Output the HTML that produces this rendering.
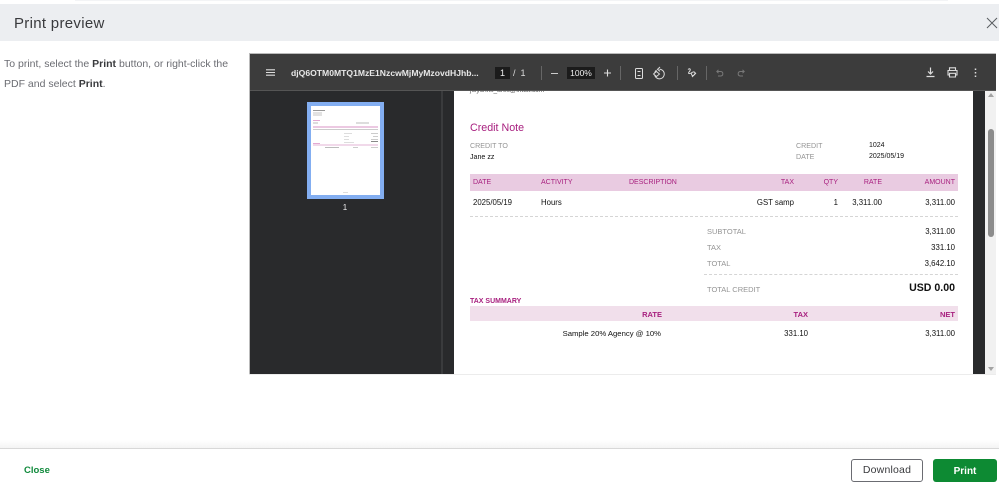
<!DOCTYPE html>
<html><head><meta charset="utf-8"><style>
html,body{margin:0;padding:0;background:#fff}
body{width:999px;height:487px;position:relative;overflow:hidden;font-family:"Liberation Sans",sans-serif}
.a,.t{position:absolute}
.t{white-space:nowrap;line-height:12px}
.g{color:#949494;font-size:7.5px}
.k{color:#111;font-size:7.8px}
.m{color:#a8207f;font-size:7px}
.r{text-align:right}
svg{position:absolute;overflow:visible}
.th .a{position:absolute}
</style></head><body>
<div class="a" style="left:75px;top:0;width:873px;height:1px;background:#f3f4f6"></div>
<div class="a" style="left:0;top:4px;width:999px;height:37px;background:#eceef1"></div>
<div class="t" style="left:14px;top:15px;font-size:15px;line-height:17px;color:#393a3d;letter-spacing:.3px">Print preview</div>
<svg style="left:987px;top:18px" width="10" height="10"><path d="M0 0L10 10M10 0L0 10" stroke="#5a5d61" stroke-width="1"/></svg>
<div class="t" style="left:4px;top:58px;font-size:10.5px;color:#6b6c72">To print, select the <b style="color:#393a3d">Print</b> button, or right-click the</div>
<div class="t" style="left:4px;top:78px;font-size:10.5px;color:#6b6c72">PDF and select <b style="color:#393a3d">Print</b>.</div>

<div class="a" style="left:249px;top:53px;width:747px;height:321px;background:#292a2c"></div>
<div class="a" style="left:249px;top:53px;width:747px;height:1px;background:#bbb"></div>
<div class="a" style="left:249px;top:53px;width:1px;height:321px;background:#bbb"></div>
<div class="a" style="left:250px;top:54px;width:746px;height:36px;background:#3c3c3c"></div>
<div class="a" style="left:441px;top:91px;width:2px;height:283px;background:#3a3b3d"></div>
<svg style="left:266px;top:69px" width="10" height="8"><path d="M0 .8H9M0 3.5H9M0 6.200H9" stroke="#ddd" stroke-width="1.100"/></svg>
<div class="t" style="left:291px;top:67px;font-size:8.6px;font-weight:bold;color:#e8e8e8">djQ6OTM0MTQ1MzE1NzcwMjMyMzovdHJhb...</div>
<div class="a" style="left:495px;top:67px;width:15px;height:12px;background:#1b1b1b"></div>
<div class="t" style="left:495px;top:67px;width:15px;text-align:center;font-size:9px;color:#eee">1</div>
<div class="t" style="left:513px;top:67px;font-size:9px;color:#ddd">/&nbsp;&nbsp;1</div>
<div class="a" style="left:541px;top:66px;width:1px;height:14px;background:#666"></div>
<div class="a" style="left:620px;top:66px;width:1px;height:14px;background:#666"></div>
<div class="a" style="left:677px;top:66px;width:1px;height:14px;background:#666"></div>
<div class="a" style="left:706px;top:66px;width:1px;height:14px;background:#666"></div>
<svg style="left:551px;top:73px" width="7" height="1"><path d="M0 .5H7" stroke="#ccc"/></svg>
<div class="a" style="left:567px;top:67px;width:28px;height:12px;background:#1b1b1b"></div>
<div class="t" style="left:567px;top:67px;width:28px;text-align:center;font-size:8.500px;color:#eee">100%</div>
<svg style="left:604px;top:69px" width="8" height="8"><path d="M0 4H7M3.500 .5V7.500" stroke="#ddd" stroke-width="1.100"/></svg>
<svg style="left:635px;top:68px" width="9" height="11"><rect x=".5" y=".5" width="7" height="10" rx="1" fill="none" stroke="#ddd"/><path d="M2.500 3.500H5.500M2.500 7.500H5.500" stroke="#ddd"/></svg>
<svg style="left:653px;top:67px" width="13" height="12"><path d="M6.500 2.200A4.800 4.800 0 1 1 3.500 3.200" fill="none" stroke="#ddd"/><path d="M7 0L4.500 2.300L7 4.400" fill="none" stroke="#ddd"/><path d="M.5 7L3.500 4.500L6.500 7L3.500 9.500Z" fill="#3c3c3c" stroke="#ddd" stroke-width=".9"/></svg>
<svg style="left:687px;top:68px" width="10" height="10"><path d="M1 1.500C3.500 -.5 4 2 2 4C.5 6 3 6 5 4.500C7 3 9 4.500 7.500 6.500C6 8.500 3.500 7 5 5.500" fill="none" stroke="#ddd"/><path d="M5 9L9 5" stroke="#ddd"/></svg>
<svg style="left:716px;top:69px" width="8" height="8"><path d="M1 2.500H5A2.300 2.300 0 0 1 5 7H2M2.500 .8L.8 2.500L2.500 4.200" fill="none" stroke="#777"/></svg>
<svg style="left:737px;top:69px" width="8" height="8"><path d="M7 2.500H3A2.300 2.300 0 0 0 3 7H6M5.500 .8L7.200 2.500L5.500 4.200" fill="none" stroke="#777"/></svg>
<svg style="left:926px;top:67px" width="9" height="11"><path d="M4.500 .5V6.500M2 4.500L4.500 7L7 4.500M.5 9.500H8.500" fill="none" stroke="#ddd" stroke-width="1.200"/></svg>
<svg style="left:947px;top:67px" width="11" height="11"><path d="M2.500 3.200V.8H8.500V3.200M2.500 8H1V3.500H10V8H8.500M2.500 6.300H8.500V10H2.500Z" fill="none" stroke="#ddd" stroke-width="1.100"/></svg>
<svg style="left:974px;top:68px" width="3" height="10"><path d="M1.500 .5V2M1.500 4V5.500M1.500 7.500V9" stroke="#ddd" stroke-width="1.500"/></svg>

<div class="a" style="left:307px;top:102px;width:77px;height:97px;background:#83aef1"></div>
<div class="a th" style="left:311px;top:106px;width:69px;height:89px;background:#fff;overflow:hidden;filter:blur(.3px)">
<div class="a" style="left:2px;top:3.500px;width:12px;height:1px;background:#999"></div>
<div class="a" style="left:2px;top:6px;width:9px;height:4px;background:#e2e2e2"></div>
<div class="a" style="left:2px;top:13.500px;width:7px;height:1px;background:#e3a9d2"></div>
<div class="a" style="left:2px;top:16px;width:5px;height:2px;background:#ddd"></div>
<div class="a" style="left:45px;top:16px;width:13px;height:2px;background:#ddd"></div>
<div class="a" style="left:2px;top:19.700px;width:65px;height:2.400px;background:#ecc9e2"></div>
<div class="a" style="left:2px;top:23px;width:65px;height:1px;background:#ccc"></div>
<div class="a" style="left:33px;top:27px;width:8px;height:1px;background:#ddd"></div>
<div class="a" style="left:60px;top:27px;width:7px;height:1px;background:#ccc"></div>
<div class="a" style="left:33px;top:30px;width:5px;height:1px;background:#ddd"></div>
<div class="a" style="left:62px;top:30px;width:5px;height:1px;background:#ccc"></div>
<div class="a" style="left:33px;top:32.500px;width:5px;height:1px;background:#ddd"></div>
<div class="a" style="left:60px;top:32.500px;width:7px;height:1px;background:#ccc"></div>
<div class="a" style="left:33px;top:35.500px;width:10px;height:1px;background:#ddd"></div>
<div class="a" style="left:60px;top:34.500px;width:7px;height:1.500px;background:#888"></div>
<div class="a" style="left:2px;top:37px;width:7px;height:1px;background:#e3a9d2"></div>
<div class="a" style="left:2px;top:38px;width:65px;height:2px;background:#f1d9ea"></div>
<div class="a" style="left:14px;top:41px;width:14px;height:1px;background:#bbb"></div>
<div class="a" style="left:42px;top:41px;width:5px;height:1px;background:#ccc"></div>
<div class="a" style="left:60px;top:41px;width:7px;height:1px;background:#ccc"></div>
<div class="a" style="left:32px;top:86px;width:5px;height:1px;background:#ddd"></div>
</div>
<div class="t" style="left:340px;top:202px;width:10px;text-align:center;font-size:8px;color:#eee">1</div>

<div class="a" style="left:454px;top:91px;width:519px;height:283px;background:#fff"></div>
<div class="a" style="left:454px;top:91px;width:519px;height:10px;overflow:hidden"><div class="t" style="left:16px;top:-6px;font-size:6.500px;color:#555">jolychris_ares@intuit.com</div></div>
<div class="a" style="left:250px;top:90px;width:746px;height:1px;background:#555"></div>
<div class="t" style="left:470px;top:122px;font-size:10.700px;color:#a8207f">Credit Note</div>
<div class="t g" style="left:470px;top:140px;font-size:7.100px">CREDIT TO</div>
<div class="t k" style="left:470px;top:151px;font-size:7.100px">Jane zz</div>
<div class="t g" style="left:796px;top:140px;font-size:7.100px">CREDIT</div>
<div class="t g" style="left:796px;top:151px;font-size:7.100px">DATE</div>
<div class="t k" style="left:869px;top:140px;font-size:7px">1024</div>
<div class="t k" style="left:869px;top:151px;font-size:7px">2025/05/19</div>

<div class="a" style="left:470px;top:174px;width:488px;height:17px;background:#e9cbe1"></div>
<div class="t m" style="left:473px;top:177px">DATE</div>
<div class="t m" style="left:541px;top:177px">ACTIVITY</div>
<div class="t m" style="left:629px;top:177px">DESCRIPTION</div>
<div class="t m r" style="right:205px;top:177px">TAX</div>
<div class="t m r" style="right:161px;top:177px">QTY</div>
<div class="t m r" style="right:117px;top:177px">RATE</div>
<div class="t m r" style="right:44px;top:177px">AMOUNT</div>
<div class="t k" style="left:473px;top:197px">2025/05/19</div>
<div class="t k" style="left:541px;top:197px">Hours</div>
<div class="t k r" style="right:205px;top:197px">GST samp</div>
<div class="t k r" style="right:161px;top:197px">1</div>
<div class="t k r" style="right:117px;top:197px">3,311.00</div>
<div class="t k r" style="right:44px;top:197px">3,311.00</div>
<div class="a" style="left:470px;top:216px;width:488px;border-top:1px dashed #d5d5d5"></div>

<div class="t g" style="left:707px;top:226px">SUBTOTAL</div>
<div class="t k r" style="right:44px;top:226px">3,311.00</div>
<div class="t g" style="left:707px;top:242px">TAX</div>
<div class="t k r" style="right:44px;top:242px">331.10</div>
<div class="t g" style="left:707px;top:258px">TOTAL</div>
<div class="t k r" style="right:44px;top:258px">3,642.10</div>
<div class="a" style="left:704px;top:274px;width:254px;border-top:1px dashed #d5d5d5"></div>
<div class="t g" style="left:707px;top:284px">TOTAL CREDIT</div>
<div class="t r" style="right:44px;top:282px;font-size:10.600px;font-weight:bold;color:#111">USD 0.00</div>

<div class="t m" style="left:470px;top:296px;font-weight:bold">TAX SUMMARY</div>
<div class="a" style="left:470px;top:306px;width:488px;height:15px;background:#f1dfeb"></div>
<div class="t m r" style="right:337px;top:309px;font-size:7.500px;font-weight:bold">RATE</div>
<div class="t m r" style="right:191px;top:309px;font-size:7.500px;font-weight:bold">TAX</div>
<div class="t m r" style="right:44px;top:309px;font-size:7.500px;font-weight:bold">NET</div>
<div class="t k r" style="right:338px;top:328px;font-size:7.700px">Sample 20% Agency @ 10%</div>
<div class="t k r" style="right:191px;top:328px">331.10</div>
<div class="t k r" style="right:44px;top:328px">3,311.00</div>

<div class="a" style="left:985px;top:91px;width:11px;height:283px;background:#f1f1f1"></div>
<div class="a" style="left:988px;top:129px;width:6px;height:108px;background:#8c8c8c;border-radius:3px"></div>
<svg style="left:988px;top:93px" width="6" height="5"><path d="M3 0L6 4H0Z" fill="#a3a3a3"/></svg>
<svg style="left:988px;top:367px" width="6" height="5"><path d="M3 4L6 0H0Z" fill="#a3a3a3"/></svg>
<div class="a" style="left:249px;top:374px;width:747px;height:1px;background:#ececec"></div>

<div class="a" style="left:0;top:440px;width:999px;height:8px;background:linear-gradient(#fff,#f4f4f4)"></div>
<div class="a" style="left:0;top:448px;width:999px;height:1px;background:#d8d8d8"></div>
<div class="t" style="left:24px;top:465px;font-size:9.500px;font-weight:bold;color:#108a3c">Close</div>
<div class="a" style="left:851px;top:459px;width:72px;height:23px;box-sizing:border-box;border:1.500px solid #6b6c72;border-radius:3px;text-align:center;font-size:10.500px;line-height:21px;color:#393a3d;letter-spacing:.2px">Download</div>
<div class="a" style="left:933px;top:459px;width:64px;height:23px;background:#0d8a33;border-radius:3px;text-align:center;font-size:10px;font-weight:bold;line-height:25px;color:#fff">Print</div>
</body></html>
